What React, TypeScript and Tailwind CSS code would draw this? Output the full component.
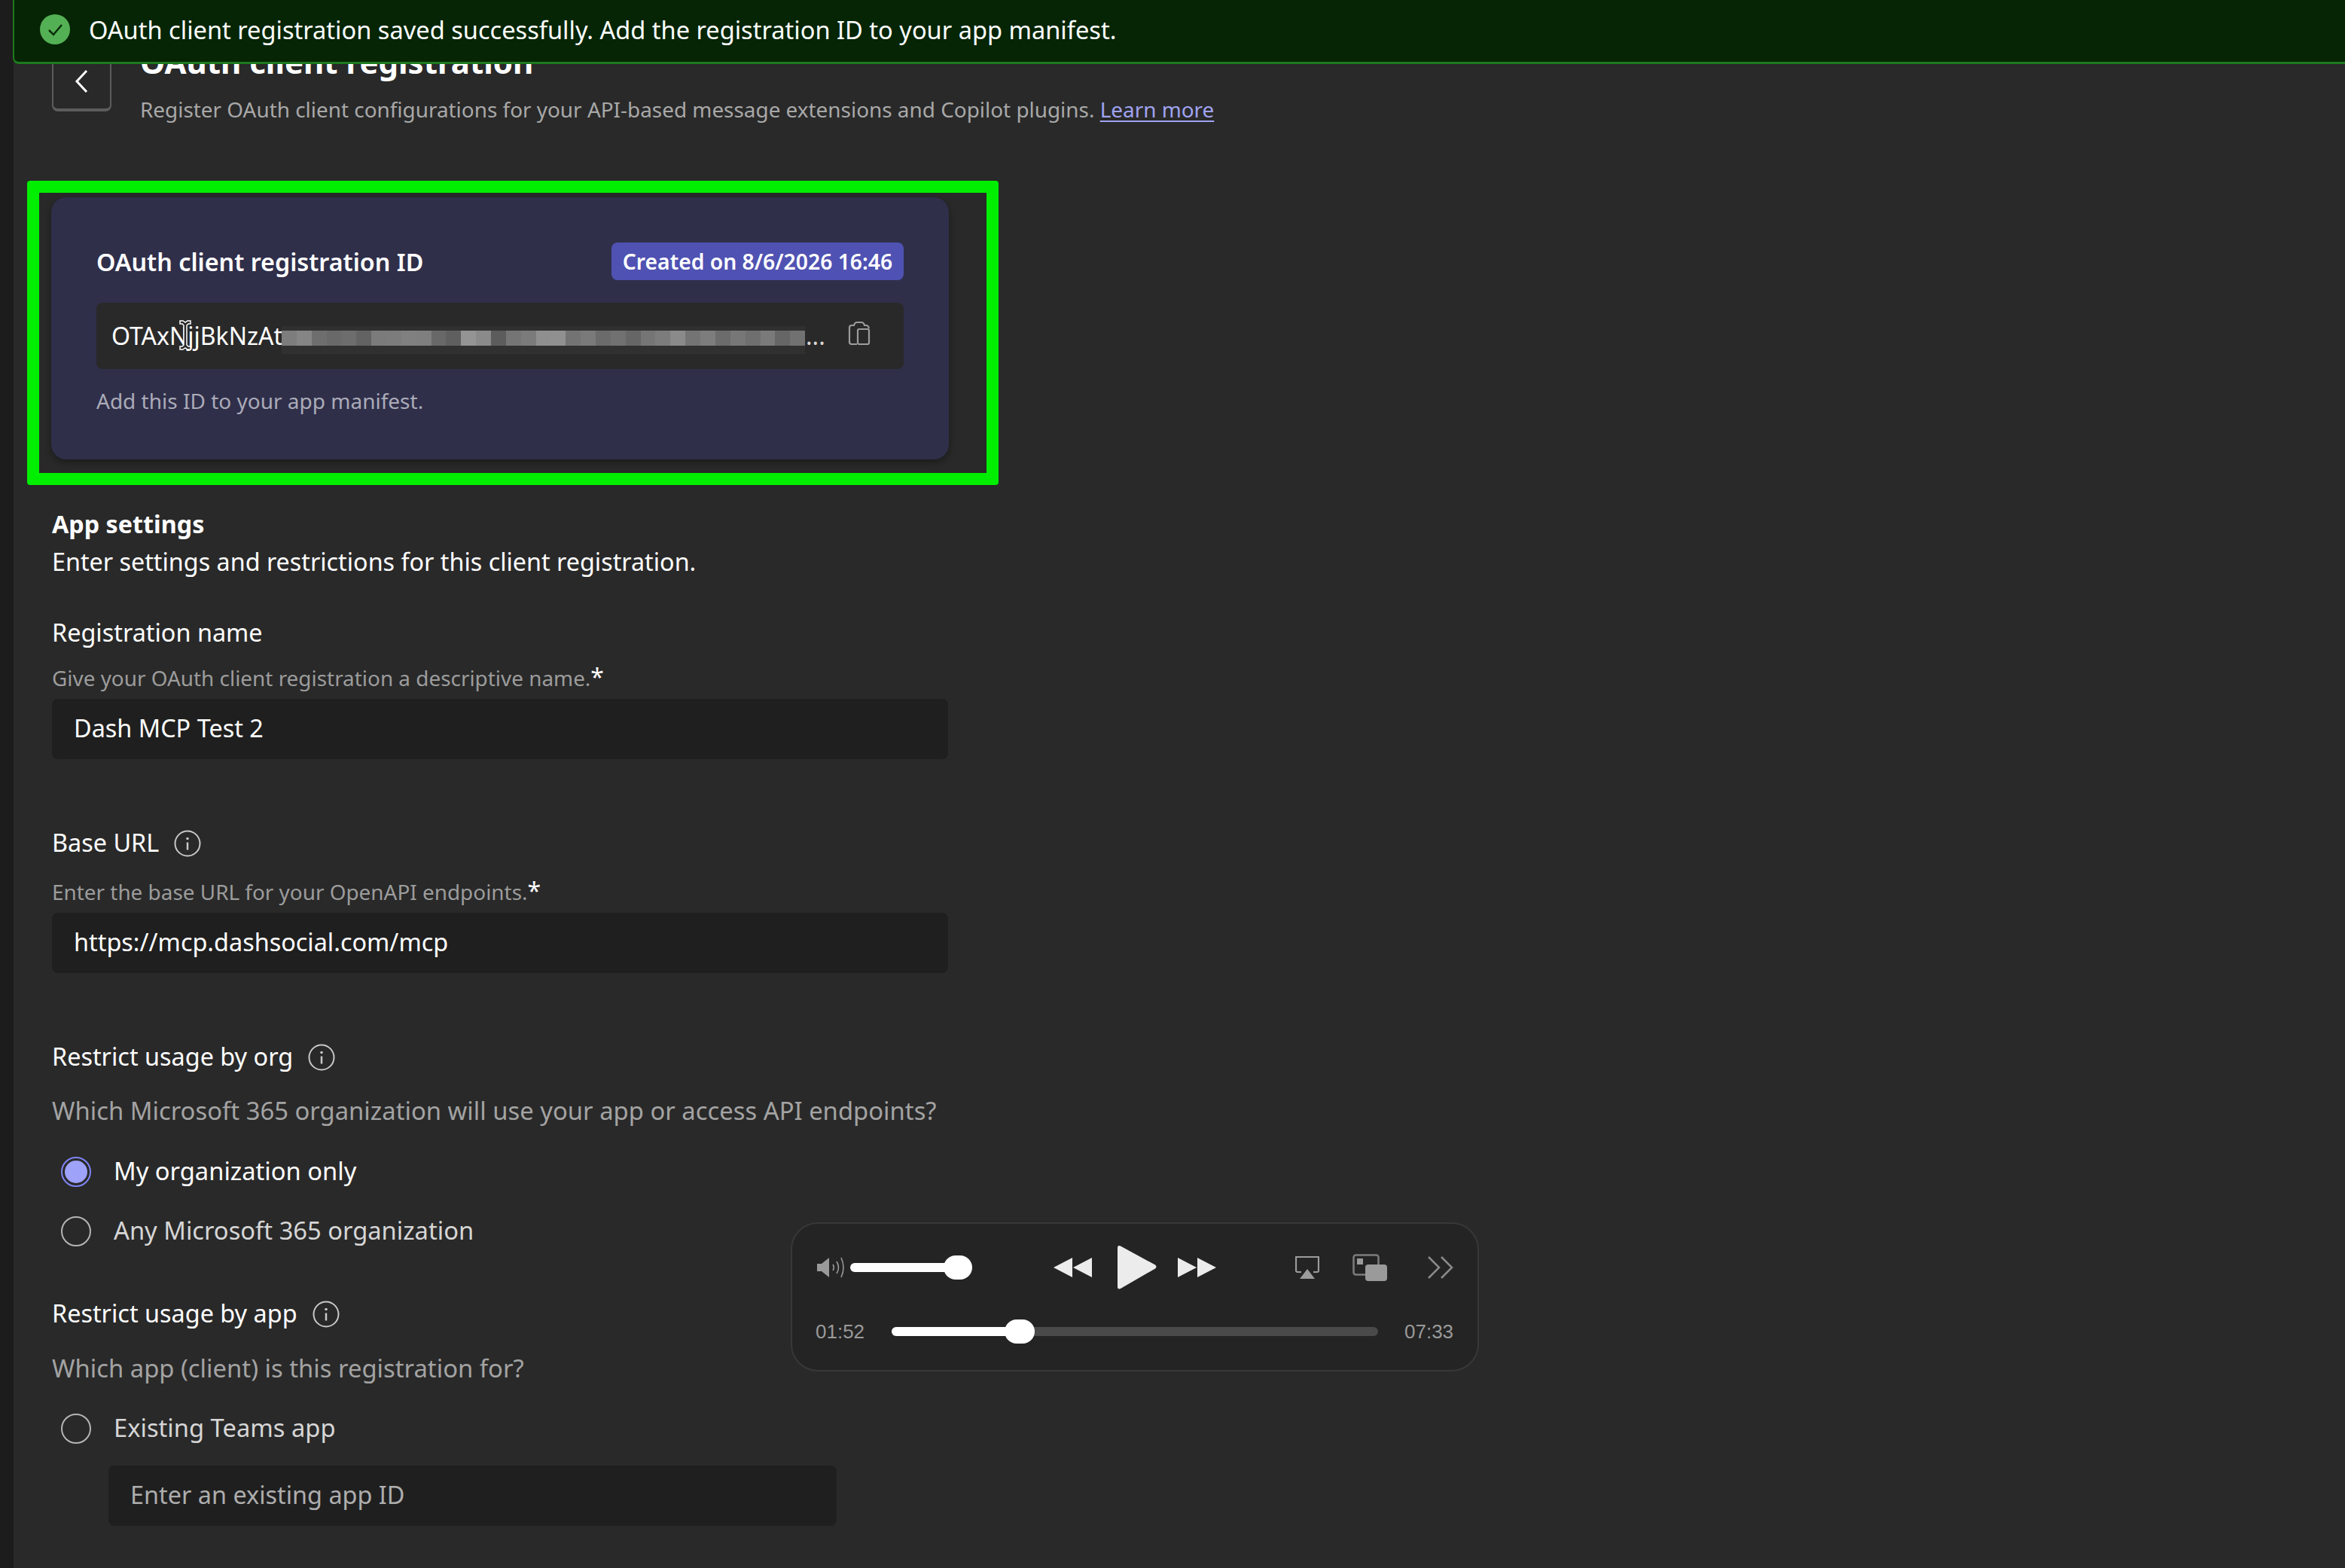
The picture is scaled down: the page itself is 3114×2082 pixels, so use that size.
const blurCells = [
  "bg-[#7d7d7d]", "bg-[#858585]", "bg-[#6e6e6e]", "bg-[#696969]", "bg-[#6d6d6d]", "bg-[#636363]", "bg-[#7b7b7b]", "bg-[#7c7c7c]",
  "bg-[#808080]", "bg-[#7f7f7f]", "bg-[#686868]", "bg-[#5f5f5f]", "bg-[#949494]", "bg-[#8a8a8a]", "bg-[#5c5c5c]", "bg-[#757575]",
  "bg-[#7b7b7b]", "bg-[#8f8f8f]", "bg-[#909090]", "bg-[#737373]", "bg-[#7a7a7a]", "bg-[#6b6b6b]", "bg-[#717171]", "bg-[#666666]",
  "bg-[#757575]", "bg-[#7c7c7c]", "bg-[#8a8a8a]", "bg-[#747474]", "bg-[#7d7d7d]", "bg-[#6c6c6c]", "bg-[#777777]", "bg-[#6f6f6f]",
  "bg-[#7a7a7a]", "bg-[#666666]", "bg-[#717171]",
];

const InfoIcon = () => (
  <svg viewBox="0 0 36 36" className="w-[36px] h-[36px] text-[#c8c8c8]" fill="none" stroke="currentColor">
    <circle cx="18" cy="18" r="16.500" strokeWidth="2" />
    <path d="M18 16.500v10" strokeWidth="2.500" />
    <circle cx="18" cy="11.500" r="1.800" fill="currentColor" stroke="none" />
  </svg>
);

const Radio = ({ checked, label }: { checked?: boolean; label: string }) => (
  <div className="flex items-center h-[44px] ml-[12px]">
    {checked ? (
      <span className="w-[40px] h-[40px] rounded-full border-2 border-[#7f85f5] flex items-center justify-center">
        <span className="w-[30px] h-[30px] rounded-full bg-[#9ea2f8]" />
      </span>
    ) : (
      <span className="w-[40px] h-[40px] rounded-full border-2 border-[#b4b4b4]" />
    )}
    <span className={`ml-[30px] pb-[3px] text-[32.7px] leading-[44px] ${checked ? "text-white" : "text-[#d6d6d6]"}`}>{label}</span>
  </div>
);

const Label = ({ text, info }: { text: string; info?: boolean }) => (
  <div className="flex items-center gap-[20px] h-[44px] text-[32.4px] text-white">
    <span className="pb-[3px]">{text}</span>
    {info && <InfoIcon />}
  </div>
);

const Hint = ({ text, required, className }: { text: string; required?: boolean; className: string }) => (
  <p className={`h-[44px] text-[27.9px] leading-[40px] text-[#9c9c9c] ${className}`}>
    {text}
    {required && <span className="text-white text-[32px]">*</span>}
  </p>
);

const Field = ({ value, placeholder, className }: { value: string; placeholder?: boolean; className: string }) => (
  <div className={`h-[80px] rounded-lg bg-[#1f1f1f] flex items-center pl-[29px] pr-[30px] pb-[3px] text-[32.4px] ${placeholder ? "text-[#adadad]" : "text-white"} ${className}`}>
    {value}
  </div>
);

const MiniPlayer = () => (
  <div className="absolute left-[1050px] top-[1623px] w-[914px] h-[198px] rounded-[36px] bg-[#242424] border-2 border-[#383838]">
    <div className="flex items-center h-[116px] pl-[33px]">
      <svg viewBox="0 0 36 28" className="w-[36px] h-[28px] text-[#9a9a9a]" fill="none" stroke="currentColor" strokeWidth="1.600">
        <path d="M0 9h6l10-8v26L6 19H0z" fill="currentColor" stroke="none" />
        <path d="M21 10q2.500 4 0 8M26 6q5 8 0 16M32 1q6 13 0 26" />
      </svg>
      <div className="relative ml-[8px] w-[162px] h-[32px] flex items-center">
        <div className="w-[140px] h-[12px] rounded-full bg-white" />
        <div className="absolute right-0 w-[38px] h-[32px] rounded-full bg-white" />
      </div>
      <svg viewBox="0 0 52 28" className="ml-[108px] w-[52px] h-[28px] text-[#ececec]" fill="currentColor">
        <path d="M0 14 25 1v26zM26 14 51 1v26z" />
      </svg>
      <svg viewBox="0 0 52 60" className="ml-[33px] w-[52px] h-[60px] text-[#ececec]" fill="currentColor">
        <path d="M0 4q0-4 4-2.500l46 25q3 2.500 0 5L4 58q-4 1.500-4-2.500z" />
      </svg>
      <svg viewBox="0 0 52 28" className="ml-[27px] w-[52px] h-[28px] text-[#ececec]" fill="currentColor">
        <path d="M1 1l25 13L1 27zM27 1l25 13-25 13z" />
      </svg>
      <svg viewBox="0 0 32 30" className="ml-[105px] w-[32px] h-[30px] text-[#9c9c9c]" fill="none" stroke="currentColor" strokeWidth="2.200">
        <path d="M8 21H3a2 2 0 0 1-2-2V1h30v18a2 2 0 0 1-2 2h-5" />
        <path d="M16 17l10 13H6z" fill="currentColor" stroke="none" />
      </svg>
      <svg viewBox="0 0 46 36" className="ml-[44px] w-[46px] h-[36px] text-[#9a9a9a]" fill="none">
        <rect x="1.500" y="1.500" width="33" height="26" rx="3" stroke="#7c7c7c" strokeWidth="2.500" />
        <rect x="17" y="14" width="29" height="22" rx="4" fill="currentColor" />
        <rect x="6" y="6" width="8" height="8" fill="currentColor" />
      </svg>
      <svg viewBox="0 0 34 30" className="ml-[54px] w-[34px] h-[30px] text-[#8a8a8a]" fill="none" stroke="currentColor" strokeWidth="2.500">
        <path d="M1 1l14 14L1 29M18 1l14 14-14 14" />
      </svg>
    </div>
    <div className="flex items-center h-[32px] mt-[11px] pl-[31px] text-[26px] leading-none text-[#9a9a9a] font-['Liberation_Sans',sans-serif]">
      <span className="w-[65px]">01:52</span>
      <div className="relative ml-[36px] w-[646px] h-[32px] flex items-center">
        <div className="w-full h-[12px] rounded-full bg-[#4a4a4a]" />
        <div className="absolute left-0 w-[170px] h-[12px] rounded-l-full bg-white" />
        <div className="absolute left-[150px] w-[40px] h-[32px] rounded-full bg-white" />
      </div>
      <span className="ml-[35px]">07:33</span>
    </div>
  </div>
);

export default function App() {
  return (
    <div className="relative flex w-[3114px] h-[2082px] overflow-hidden bg-[#292929] font-['Noto_Sans',sans-serif]">
      <div className="w-[18px] shrink-0 bg-[#1c1c1c]" />

      <main className="flex-1 pl-[51px] pt-[60px]">
        {/* header, top part sits under the banner */}
        <div className="flex items-start gap-[38px]">
          <button className="mt-[9px] w-[79px] h-[79px] rounded-lg border-2 border-b-4 border-[#5c5c5c] flex items-center justify-center text-white">
            <svg viewBox="0 0 20 32" className="w-[20px] h-[32px]" fill="none" stroke="currentColor" strokeWidth="3">
              <path d="M16 2 3 16l13 14" />
            </svg>
          </button>
          <div>
            <h1 className="h-[44px] text-[42px] leading-[44px] font-bold text-white">OAuth client registration</h1>
            <p className="mt-[21px] h-[44px] text-[27.9px] leading-[40px] text-[#a8a8a8]">
              Register OAuth client configurations for your API-based message extensions and Copilot plugins.{" "}
              <a className="text-[#a0a3f0] underline underline-offset-4">Learn more</a>
            </p>
          </div>
        </div>

        {/* green highlight round the ID card */}
        <div className="mt-[71px] -ml-[33px] w-[1290px] h-[404px] border-[16px] border-[#00ee00] rounded-[4px] pl-[16px] pt-[6px]">
          <div className="w-[1192px] h-[348px] rounded-[20px] bg-[#2f2f4a] shadow-[0_4px_10px_rgba(0,0,0,0.35)] px-[60px] pt-[60px]">
            <div className="flex items-center justify-between h-[50px]">
              <h2 className="text-[32.300px] font-semibold text-white">OAuth client registration ID</h2>
              <span className="h-[50px] w-[388px] rounded-lg bg-[#4f52b2] flex items-center justify-center text-[28.300px] font-semibold text-white">
                Created on 8/6/2026 16:46
              </span>
            </div>
            <div className="relative mt-[30px] h-[88px] rounded-lg bg-[#292929] flex items-center pl-[20px] text-[32px] text-white">
              <span className="w-[226px] overflow-hidden">OTAxNjjBkNzAt</span>
              <div className="self-start mt-[31px] w-[695px] h-[37px] bg-[#303030] pt-[6px]">
                <div className="flex w-full h-[20px]">
                  {blurCells.map((c, i) => (
                    <div key={i} className={`flex-1 ${c}`} />
                  ))}
                </div>
              </div>
              <span className="ml-[1px] text-[#d8d8d8]">...</span>
              <svg viewBox="0 0 30 32" className="ml-[30px] w-[30px] h-[32px] text-[#9c9c9c] -mt-[8px]" fill="none" stroke="currentColor" strokeWidth="2.200">
                <path d="M12 31H5a3 3 0 0 1-3-3V9a3 3 0 0 1 3-3h3q1-4 4-4h6q3 0 4 4h2q3 0 4 4" />
                <rect x="13" y="11" width="15" height="20" rx="2" />
              </svg>
              {/* mouse cursor over the id */}
              <svg viewBox="0 0 16 40" className="absolute left-[110px] top-[20px] w-[16px] h-[46px]" fill="#292929" stroke="#ffffff" strokeWidth="1.500">
                <path d="M1 1h4l3 2 3-2h4v4h-3l-2 2v26l2 2h3v4h-4l-3-2-3 2H1v-4h3l2-2V7L4 5H1z" />
              </svg>
            </div>
            <p className="mt-[20px] h-[44px] text-[28px] leading-[44px] text-[#ababb8]">Add this ID to your app manifest.</p>
          </div>
        </div>

        <h3 className="mt-[32px] h-[44px] text-[32.300px] leading-[38px] font-bold text-white">App settings</h3>
        <p className="mt-[5px] h-[44px] text-[32.300px] leading-[40px] text-white">Enter settings and restrictions for this client registration.</p>

        <div className="mt-[50px]"><Label text="Registration name" /></div>
        <Hint text="Give your OAuth client registration a descriptive name." required className="mt-[16px]" />
        <Field value="Dash MCP Test 2" className="mt-[5px] w-[1190px]" />

        <div className="mt-[90px]"><Label text="Base URL" info /></div>
        <Hint text="Enter the base URL for your OpenAPI endpoints." required className="mt-[21px]" />
        <Field value="https://mcp.dashsocial.com/mcp" className="mt-[5px] w-[1190px]" />

        <div className="mt-[90px]"><Label text="Restrict usage by org" info /></div>
        <p className="mt-[29px] h-[44px] text-[32.800px] leading-[40px] text-[#a3a3a3]">Which Microsoft 365 organization will use your app or access API endpoints?</p>
        <div className="mt-[35px]"><Radio checked label="My organization only" /></div>
        <div className="mt-[35px]"><Radio label="Any Microsoft 365 organization" /></div>

        <div className="mt-[66px]"><Label text="Restrict usage by app" info /></div>
        <p className="mt-[30px] h-[44px] text-[32.800px] leading-[40px] text-[#a3a3a3]">Which app (client) is this registration for?</p>
        <div className="mt-[34px]"><Radio label="Existing Teams app" /></div>
        <Field value="Enter an existing app ID" placeholder className="mt-[27px] ml-[75px] w-[967px]" />
      </main>

      {/* success banner */}
      <div className="absolute left-[17px] right-0 top-0 h-[85px] bg-[#052505] border-b-[3px] border-l-2 border-[#1d7a1d] rounded-bl-lg flex items-center pl-[34px]">
        <svg viewBox="0 0 40 40" className="w-[40px] h-[40px] -mt-[5px]">
          <circle cx="20" cy="20" r="20" fill="#54b054" />
          <path d="M12 21l6 6 11-13" fill="none" stroke="#0b2e0b" strokeWidth="2.500" />
        </svg>
        <span className="ml-[25px] -mt-[2px] text-[32.600px] text-white">OAuth client registration saved successfully. Add the registration ID to your app manifest.</span>
      </div>

      <MiniPlayer />
    </div>
  );
}
